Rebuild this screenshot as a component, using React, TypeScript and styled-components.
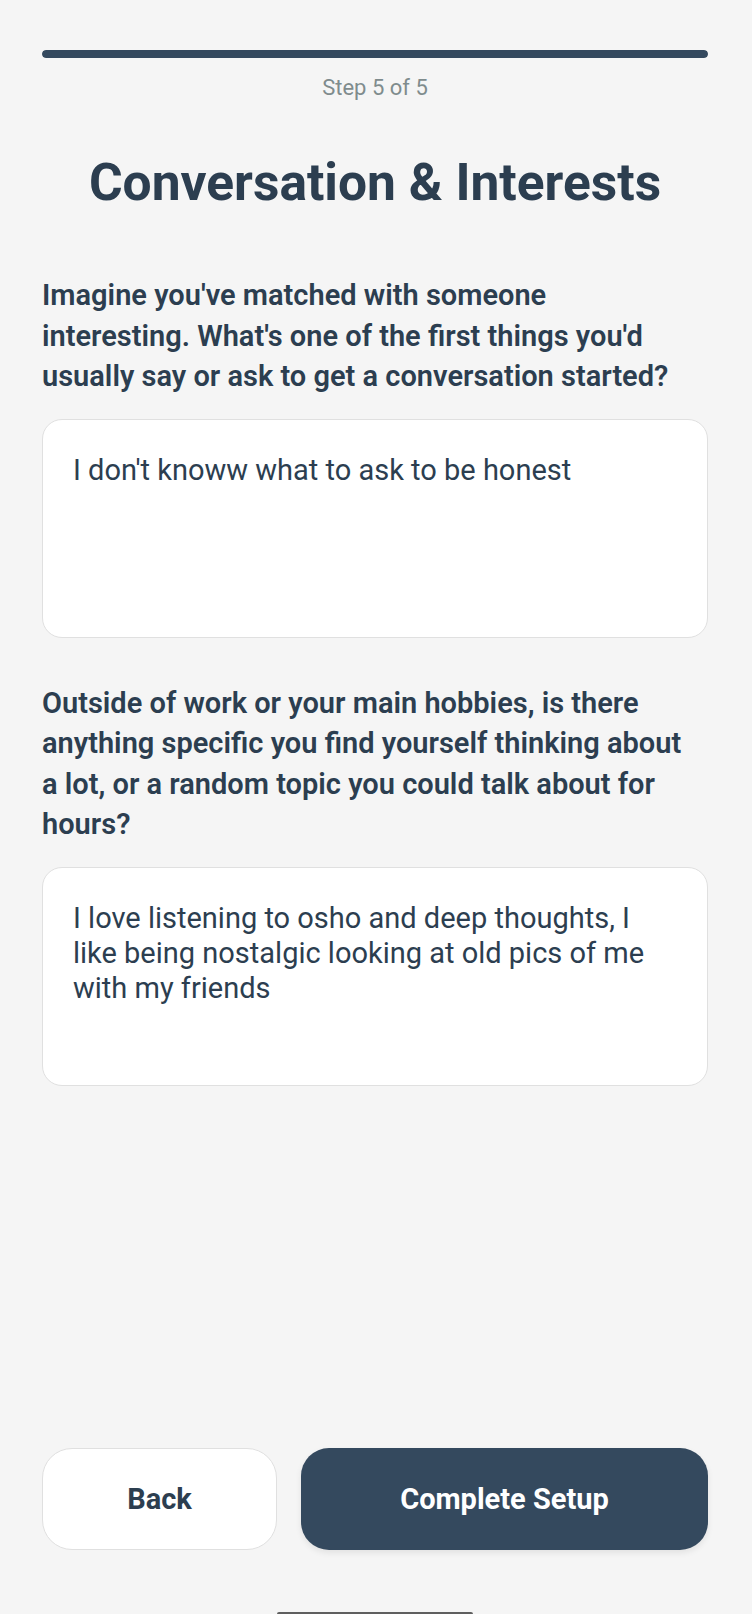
import React from 'react'
import styled, { createGlobalStyle } from 'styled-components'

const GlobalStyle = createGlobalStyle`
  html, body {
    margin: 0;
    padding: 0;
    background: #f5f5f5;
  }

  body {
    font-family: Roboto, "Liberation Sans", Arial, sans-serif;
    -webkit-font-smoothing: antialiased;
  }

  * {
    box-sizing: border-box;
  }
`

const Screen = styled.div`
  position: relative;
  min-height: 1614px;
  display: flex;
  flex-direction: column;
  padding: 50px 44px 0 42px;
  background: #f5f5f5;
  color: #2c3e50;
`

const ProgressTrack = styled.div`
  height: 8px;
  border-radius: 4px;
  background: #e0e0e0;
  overflow: hidden;
`

const ProgressFill = styled.div`
  height: 100%;
  border-radius: 4px;
  background: #34495e;
`

const StepLabel = styled.div`
  margin-top: 17px;
  font-size: 22px;
  line-height: 25px;
  text-align: center;
  color: #7f8c8d;
`

const Title = styled.h1`
  margin: 52px 0 0;
  font-size: 51.5px;
  line-height: 62px;
  font-weight: 700;
  text-align: center;
  color: #2c3e50;
`

const Question = styled.label<{ $first?: boolean }>`
  display: block;
  margin-top: ${props => (props.$first ? '61px' : '45px')};
  padding-right: 14px;
  font-size: 29px;
  line-height: 40.5px;
  font-weight: 600;
  color: #2c3e50;
`

const Answer = styled.textarea`
  display: block;
  width: 100%;
  height: 219px;
  margin-top: 22px;
  padding: 33px 30px;
  border: 1px solid #e0e0e0;
  border-radius: 20px;
  background: #ffffff;
  font-family: inherit;
  font-size: 29px;
  line-height: 35px;
  color: #2c3e50;
  resize: none;
  outline: none;
  overflow: hidden;
`

const Spacer = styled.div`
  flex: 1;
`

const ButtonRow = styled.div`
  display: flex;
  gap: 24px;
  margin-bottom: 64px;
`

const Button = styled.button<{ $primary?: boolean }>`
  height: 102px;
  flex: ${props => (props.$primary ? '1 1 auto' : '0 0 235px')};
  border-radius: ${props => (props.$primary ? '28px' : '30px')};
  border: ${props => (props.$primary ? 'none' : '1.5px solid #e0e0e0')};
  background: ${props => (props.$primary ? '#34495e' : '#ffffff')};
  color: ${props => (props.$primary ? '#ffffff' : '#2c3e50')};
  box-shadow: ${props => (props.$primary ? '0 3px 6px rgba(0, 0, 0, 0.08)' : 'none')};
  font-family: inherit;
  font-size: 29px;
  font-weight: 700;
  cursor: pointer;
`

const HomeIndicator = styled.div`
  position: absolute;
  left: 277px;
  bottom: 0;
  width: 196px;
  height: 2px;
  border-radius: 2px 2px 0 0;
  background: #5f5f5f;
`

const questions = [
  {
    id: 'opener',
    text: "Imagine you've matched with someone interesting. What's one of the first things you'd usually say or ask to get a conversation started?",
    answer: "I don't knoww what to ask to be honest",
  },
  {
    id: 'topic',
    text: 'Outside of work or your main hobbies, is there anything specific you find yourself thinking about a lot, or a random topic you could talk about for hours?',
    answer: 'I love listening to osho and deep thoughts, I like being nostalgic looking at old pics of me with my friends',
  },
]

export default function App() {
  const step = 5
  const total = 5

  return (
    <>
      <GlobalStyle />
      <Screen>
        <ProgressTrack>
          <ProgressFill style={{ width: `${(step / total) * 100}%` }} />
        </ProgressTrack>
        <StepLabel>
          Step {step} of {total}
        </StepLabel>
        <Title>Conversation &amp; Interests</Title>

        {questions.map((q, i) => (
          <React.Fragment key={q.id}>
            <Question $first={i === 0} htmlFor={q.id}>
              {q.text}
            </Question>
            <Answer id={q.id} defaultValue={q.answer} />
          </React.Fragment>
        ))}

        <Spacer />

        <ButtonRow>
          <Button>Back</Button>
          <Button $primary>Complete Setup</Button>
        </ButtonRow>
        <HomeIndicator />
      </Screen>
    </>
  )
}
